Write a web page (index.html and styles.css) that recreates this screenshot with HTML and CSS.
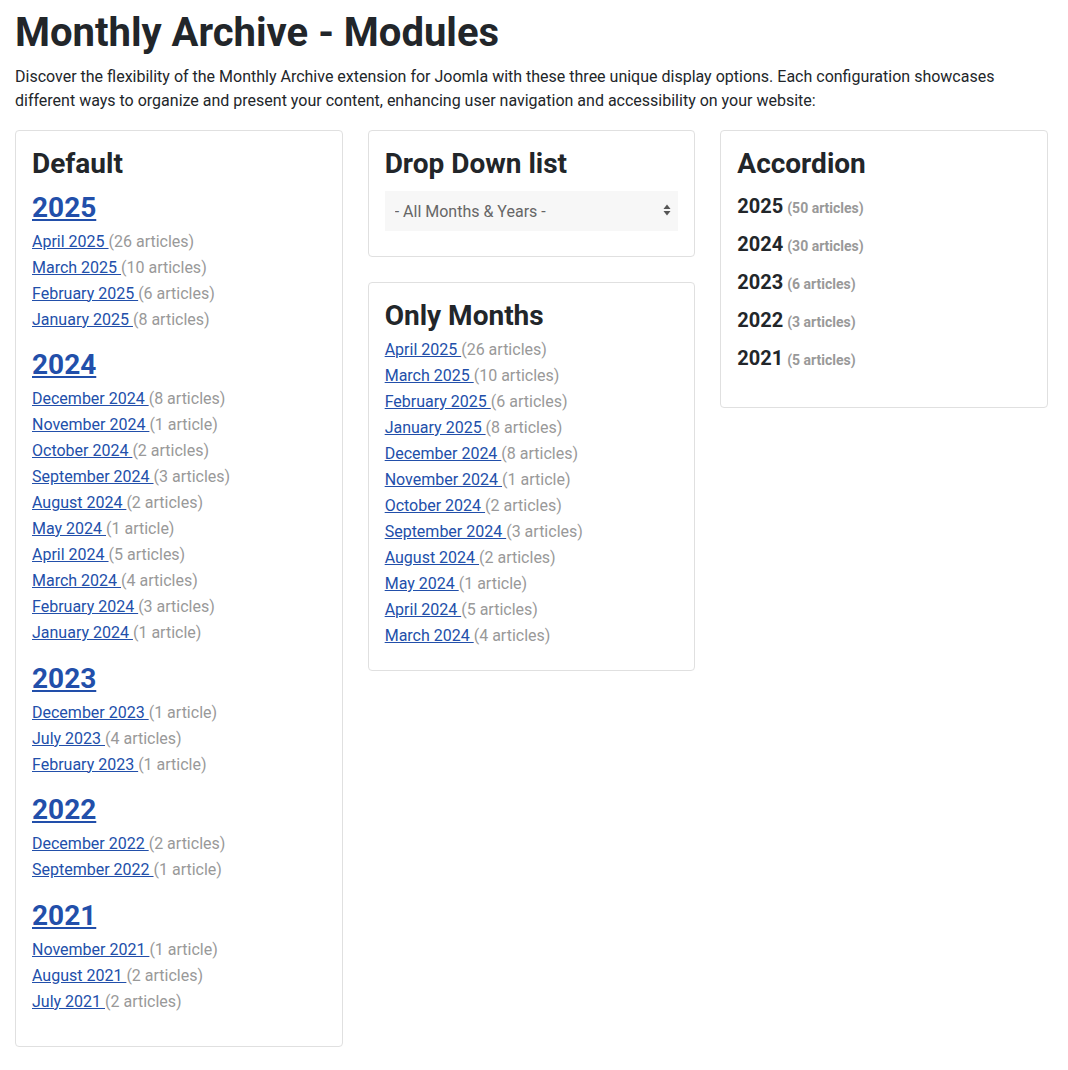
FILE: index.html
```html
<!DOCTYPE html>
<html lang="en">
<head>
<meta charset="utf-8">
<title>Monthly Archive - Modules</title>
<link rel="stylesheet" href="styles.css">
</head>
<body>
<main class="page">
  <h1 class="page-title">Monthly Archive - Modules</h1>
  <p class="intro">Discover the flexibility of the Monthly Archive extension for Joomla with these three unique display options. Each configuration showcases different ways to organize and present your content, enhancing user navigation and accessibility on your website:</p>

  <div class="modules">
    <section class="card card-default">
      <h3 class="card-title">Default</h3>
      <div class="year-block">
        <h4 class="year"><a href="#">2025</a></h4>
        <ul class="months">
          <li><a href="#">April 2025 </a><span class="count">(26 articles)</span></li>
          <li><a href="#">March 2025 </a><span class="count">(10 articles)</span></li>
          <li><a href="#">February 2025 </a><span class="count">(6 articles)</span></li>
          <li><a href="#">January 2025 </a><span class="count">(8 articles)</span></li>
        </ul>
      </div>
      <div class="year-block">
        <h4 class="year"><a href="#">2024</a></h4>
        <ul class="months">
          <li><a href="#">December 2024 </a><span class="count">(8 articles)</span></li>
          <li><a href="#">November 2024 </a><span class="count">(1 article)</span></li>
          <li><a href="#">October 2024 </a><span class="count">(2 articles)</span></li>
          <li><a href="#">September 2024 </a><span class="count">(3 articles)</span></li>
          <li><a href="#">August 2024 </a><span class="count">(2 articles)</span></li>
          <li><a href="#">May 2024 </a><span class="count">(1 article)</span></li>
          <li><a href="#">April 2024 </a><span class="count">(5 articles)</span></li>
          <li><a href="#">March 2024 </a><span class="count">(4 articles)</span></li>
          <li><a href="#">February 2024 </a><span class="count">(3 articles)</span></li>
          <li><a href="#">January 2024 </a><span class="count">(1 article)</span></li>
        </ul>
      </div>
      <div class="year-block">
        <h4 class="year"><a href="#">2023</a></h4>
        <ul class="months">
          <li><a href="#">December 2023 </a><span class="count">(1 article)</span></li>
          <li><a href="#">July 2023 </a><span class="count">(4 articles)</span></li>
          <li><a href="#">February 2023 </a><span class="count">(1 article)</span></li>
        </ul>
      </div>
      <div class="year-block">
        <h4 class="year"><a href="#">2022</a></h4>
        <ul class="months">
          <li><a href="#">December 2022 </a><span class="count">(2 articles)</span></li>
          <li><a href="#">September 2022 </a><span class="count">(1 article)</span></li>
        </ul>
      </div>
      <div class="year-block">
        <h4 class="year"><a href="#">2021</a></h4>
        <ul class="months">
          <li><a href="#">November 2021 </a><span class="count">(1 article)</span></li>
          <li><a href="#">August 2021 </a><span class="count">(2 articles)</span></li>
          <li><a href="#">July 2021 </a><span class="count">(2 articles)</span></li>
        </ul>
      </div>
    </section>

    <div class="column">
      <section class="card card-dropdown">
        <h3 class="card-title">Drop Down list</h3>
        <div class="select-wrap">
          <select class="select">
            <option>- All Months &amp; Years -</option>
          </select>
          <svg class="select-arrows" width="8" height="12" viewBox="0 0 8 12" aria-hidden="true">
            <path d="M4 0.5 L7.5 5 H0.5 Z" fill="#555"/>
            <path d="M4 11.5 L7.5 7 H0.5 Z" fill="#555"/>
          </svg>
        </div>
      </section>

      <section class="card card-months">
        <h3 class="card-title">Only Months</h3>
        <ul class="months">
          <li><a href="#">April 2025 </a><span class="count">(26 articles)</span></li>
          <li><a href="#">March 2025 </a><span class="count">(10 articles)</span></li>
          <li><a href="#">February 2025 </a><span class="count">(6 articles)</span></li>
          <li><a href="#">January 2025 </a><span class="count">(8 articles)</span></li>
          <li><a href="#">December 2024 </a><span class="count">(8 articles)</span></li>
          <li><a href="#">November 2024 </a><span class="count">(1 article)</span></li>
          <li><a href="#">October 2024 </a><span class="count">(2 articles)</span></li>
          <li><a href="#">September 2024 </a><span class="count">(3 articles)</span></li>
          <li><a href="#">August 2024 </a><span class="count">(2 articles)</span></li>
          <li><a href="#">May 2024 </a><span class="count">(1 article)</span></li>
          <li><a href="#">April 2024 </a><span class="count">(5 articles)</span></li>
          <li><a href="#">March 2024 </a><span class="count">(4 articles)</span></li>
        </ul>
      </section>
    </div>

    <section class="card card-accordion">
      <h3 class="card-title">Accordion</h3>
      <ul class="accordion">
        <li><span class="acc-year">2025</span> <span class="acc-count">(50 articles)</span></li>
        <li><span class="acc-year">2024</span> <span class="acc-count">(30 articles)</span></li>
        <li><span class="acc-year">2023</span> <span class="acc-count">(6 articles)</span></li>
        <li><span class="acc-year">2022</span> <span class="acc-count">(3 articles)</span></li>
        <li><span class="acc-year">2021</span> <span class="acc-count">(5 articles)</span></li>
      </ul>
    </section>
  </div>
</main>
</body>
</html>
```

FILE: styles.css
```css
* {
  box-sizing: border-box;
}

body {
  margin: 0;
  background: #fff;
  color: #22262a;
  font-family: Roboto, "Noto Sans", "Liberation Sans", sans-serif;
  font-size: 16px;
  line-height: 1.5;
}

.page {
  padding: 9px 20px 20px 15px;
}

.page-title {
  margin: 0 0 8px;
  font-size: 40px;
  line-height: 48px;
  font-weight: 700;
  color: #22262a;
}

.intro {
  margin: 0 0 17px;
  font-size: 16px;
  line-height: 24px;
}

.modules {
  display: grid;
  grid-template-columns: repeat(3, 1fr);
  gap: 25px;
  align-items: start;
}

.column {
  display: flex;
  flex-direction: column;
  gap: 25px;
}

.card {
  border: 1px solid #e0e0e0;
  border-radius: 4px;
  padding: 16px;
  background: #fff;
}

.card-title {
  margin: 0 0 4px;
  font-size: 28px;
  line-height: 34px;
  font-weight: 700;
  color: #22262a;
}

a {
  color: #224faa;
  text-decoration: underline;
}

.months {
  list-style: none;
  margin: 0;
  padding: 0;
}

.months li {
  font-size: 16px;
  line-height: 26px;
  white-space: nowrap;
}

.count {
  color: #999;
}

/* Default */
.card-default .card-title {
  margin-bottom: 8.5px;
}

.year {
  margin: 0 0 3px;
  font-size: 28px;
  line-height: 36px;
  font-weight: 700;
}

.year-block + .year-block {
  margin-top: 14.5px;
}

.card-default .year-block:last-child {
  margin-bottom: 15px;
}

/* Drop down */
.card-dropdown .card-title {
  margin-bottom: 10px;
}

.select-wrap {
  position: relative;
  margin-bottom: 9px;
}

.select {
  display: block;
  width: 100%;
  height: 40px;
  padding: 0 30px 0 10px;
  border: 0;
  border-radius: 0;
  background: #f7f7f7;
  color: #666;
  font-family: Roboto, "Noto Sans", "Liberation Sans", sans-serif;
  font-size: 16px;
  -webkit-appearance: none;
  appearance: none;
}

.select-arrows {
  position: absolute;
  right: 7px;
  top: 13px;
  pointer-events: none;
}

/* Only months */
.card-months .months {
  margin-bottom: 5px;
}

/* Accordion */
.accordion {
  list-style: none;
  margin: 0 0 14px;
  padding: 2px 0 0;
}

.accordion li {
  height: 38px;
  line-height: 38px;
  white-space: nowrap;
}

.acc-year {
  font-size: 20px;
  font-weight: 700;
  color: #22262a;
}

.acc-count {
  font-size: 14px;
  font-weight: 700;
  color: #999;
}
```
